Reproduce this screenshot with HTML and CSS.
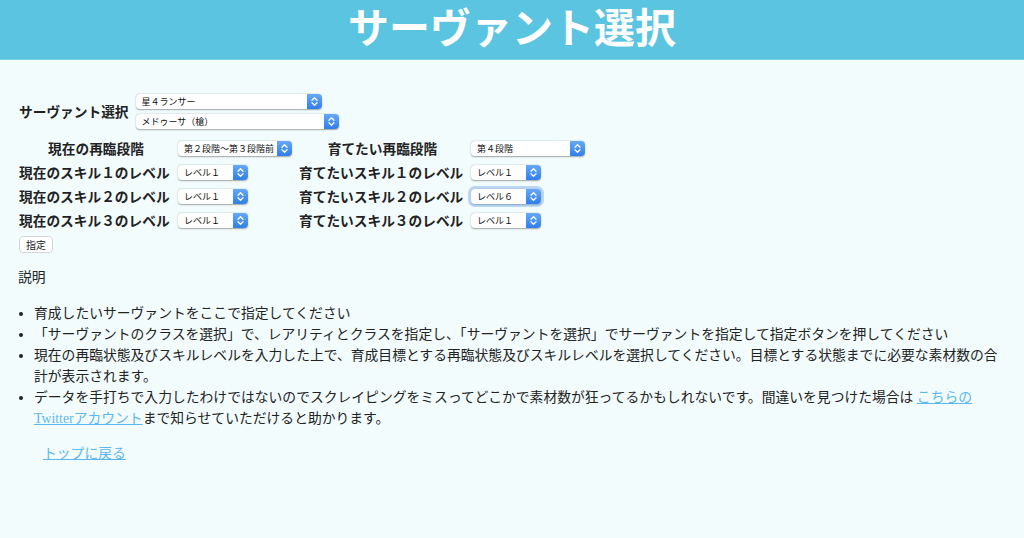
FILE: index.html
```html
<!DOCTYPE html>
<html lang="ja">
<head>
<meta charset="utf-8">
<title>サーヴァント選択</title>
<link rel="stylesheet" href="styles.css">
</head>
<body>
<header class="top">
  <h1 class="title">サーヴァント選択</h1>
</header>
<main class="main">
  <div class="servant-row">
    <span class="label">サーヴァント選択</span>
    <div class="servant-selects">
      <span class="sel w186"><select><option>星４ランサー</option></select><span class="arr"><svg width="15" height="15" viewBox="0 0 15 15"><path d="M5 6.2 L7.5 3.7 L10 6.2 M5 8.8 L7.5 11.3 L10 8.8" fill="none" stroke="#fff" stroke-width="1.3" stroke-linecap="round" stroke-linejoin="round"/></svg></span></span>
      <span class="sel w203"><select><option>メドゥーサ（槍）</option></select><span class="arr"><svg width="15" height="15" viewBox="0 0 15 15"><path d="M5 6.2 L7.5 3.7 L10 6.2 M5 8.8 L7.5 11.3 L10 8.8" fill="none" stroke="#fff" stroke-width="1.3" stroke-linecap="round" stroke-linejoin="round"/></svg></span></span>
    </div>
  </div>

  <div class="grid">
    <span class="label center">現在の再臨段階</span>
    <span class="cell"><span class="sel w114"><select><option>第２段階〜第３段階前</option></select><span class="arr"><svg width="15" height="15" viewBox="0 0 15 15"><path d="M5 6.2 L7.5 3.7 L10 6.2 M5 8.8 L7.5 11.3 L10 8.8" fill="none" stroke="#fff" stroke-width="1.3" stroke-linecap="round" stroke-linejoin="round"/></svg></span></span></span>
    <span class="label center">育てたい再臨段階</span>
    <span class="cell"><span class="sel w114"><select><option>第４段階</option></select><span class="arr"><svg width="15" height="15" viewBox="0 0 15 15"><path d="M5 6.2 L7.5 3.7 L10 6.2 M5 8.8 L7.5 11.3 L10 8.8" fill="none" stroke="#fff" stroke-width="1.3" stroke-linecap="round" stroke-linejoin="round"/></svg></span></span></span>

    <span class="label">現在のスキル１のレベル</span>
    <span class="cell"><span class="sel w70"><select><option>レベル１</option></select><span class="arr"><svg width="15" height="15" viewBox="0 0 15 15"><path d="M5 6.2 L7.5 3.7 L10 6.2 M5 8.8 L7.5 11.3 L10 8.8" fill="none" stroke="#fff" stroke-width="1.3" stroke-linecap="round" stroke-linejoin="round"/></svg></span></span></span>
    <span class="label">育てたいスキル１のレベル</span>
    <span class="cell"><span class="sel w70"><select><option>レベル１</option></select><span class="arr"><svg width="15" height="15" viewBox="0 0 15 15"><path d="M5 6.2 L7.5 3.7 L10 6.2 M5 8.8 L7.5 11.3 L10 8.8" fill="none" stroke="#fff" stroke-width="1.3" stroke-linecap="round" stroke-linejoin="round"/></svg></span></span></span>

    <span class="label">現在のスキル２のレベル</span>
    <span class="cell"><span class="sel w70"><select><option>レベル１</option></select><span class="arr"><svg width="15" height="15" viewBox="0 0 15 15"><path d="M5 6.2 L7.5 3.7 L10 6.2 M5 8.8 L7.5 11.3 L10 8.8" fill="none" stroke="#fff" stroke-width="1.3" stroke-linecap="round" stroke-linejoin="round"/></svg></span></span></span>
    <span class="label">育てたいスキル２のレベル</span>
    <span class="cell"><span class="sel w70 focus"><select><option>レベル６</option></select><span class="arr"><svg width="15" height="15" viewBox="0 0 15 15"><path d="M5 6.2 L7.5 3.7 L10 6.2 M5 8.8 L7.5 11.3 L10 8.8" fill="none" stroke="#fff" stroke-width="1.3" stroke-linecap="round" stroke-linejoin="round"/></svg></span></span></span>

    <span class="label">現在のスキル３のレベル</span>
    <span class="cell"><span class="sel w70"><select><option>レベル１</option></select><span class="arr"><svg width="15" height="15" viewBox="0 0 15 15"><path d="M5 6.2 L7.5 3.7 L10 6.2 M5 8.8 L7.5 11.3 L10 8.8" fill="none" stroke="#fff" stroke-width="1.3" stroke-linecap="round" stroke-linejoin="round"/></svg></span></span></span>
    <span class="label">育てたいスキル３のレベル</span>
    <span class="cell"><span class="sel w70"><select><option>レベル１</option></select><span class="arr"><svg width="15" height="15" viewBox="0 0 15 15"><path d="M5 6.2 L7.5 3.7 L10 6.2 M5 8.8 L7.5 11.3 L10 8.8" fill="none" stroke="#fff" stroke-width="1.3" stroke-linecap="round" stroke-linejoin="round"/></svg></span></span></span>
  </div>

  <button class="btn" type="button">指定</button>

  <p class="heading">説明</p>
  <ul class="notes">
    <li>育成したいサーヴァントをここで指定してください</li>
    <li>「サーヴァントのクラスを選択」で、レアリティとクラスを指定し、「サーヴァントを選択」でサーヴァントを指定して指定ボタンを押してください</li>
    <li>現在の再臨状態及びスキルレベルを入力した上で、育成目標とする再臨状態及びスキルレベルを選択してください。目標とする状態までに必要な素材数の合計が表示されます。</li>
    <li>データを手打ちで入力したわけではないのでスクレイピングをミスってどこかで素材数が狂ってるかもしれないです。間違いを見つけた場合は <a class="link" href="#">こちらの</a><a class="link" href="#">Twitterアカウント</a>まで知らせていただけると助かります。</li>
  </ul>
  <p class="back"><a class="link" href="#">トップに戻る</a></p>
</main>
</body>
</html>
```

FILE: styles.css
```css
body {
  margin: 0;
  background: #f2fcfd;
  color: #222;
  font-family: "Liberation Serif", "Noto Sans CJK JP", serif;
}

.top {
  background: #5bc4e0;
  height: 59px;
  border-bottom: 1px solid #7fd2e8;
}

.title {
  margin: 0;
  text-align: center;
  color: #fff;
  font-size: 41px;
  line-height: 58px;
  font-weight: 700;
}

.main {
  padding: 0 18px;
}

.servant-row {
  margin-top: 34px;
  display: flex;
  align-items: center;
  gap: 7px;
}

.label {
  font-size: 13.7px;
  font-weight: 700;
  white-space: nowrap;
  padding-left: 1px;
}

.servant-row .label {
  margin-bottom: 2px;
}

.center {
  text-align: center;
}

.servant-selects {
  display: flex;
  flex-direction: column;
  gap: 5px;
}

.sel {
  display: flex;
  height: 15px;
  background: #fff;
  border-radius: 4px;
  box-shadow: 0 0.5px 1.5px rgba(0, 0, 0, 0.35);
  overflow: hidden;
}

.sel select {
  flex: 1;
  min-width: 0;
  appearance: none;
  -webkit-appearance: none;
  border: none;
  background: transparent;
  margin: 0;
  padding: 0 0 0 6px;
  height: 15px;
  font-family: "Noto Sans CJK JP", sans-serif;
  font-size: 9px;
  line-height: 15px;
  color: #111;
  outline: none;
}

.arr {
  width: 15px;
  height: 15px;
  flex: none;
  background: linear-gradient(#67a9f7, #2f7ee9);
  display: flex;
}

.w186 { width: 186px; }
.w203 { width: 203px; }
.w114 { width: 114px; }
.w70 { width: 70px; }

.focus {
  box-shadow: 0 0 0 3px rgba(120, 170, 240, 0.45), 0 0.5px 1.5px rgba(0, 0, 0, 0.35);
}

.grid {
  margin-top: 7px;
  display: grid;
  grid-template-columns: 155px 115px 168px auto;
  grid-auto-rows: 24px;
  column-gap: 5px;
  align-items: center;
}

.cell {
  display: flex;
}

.btn {
  display: block;
  margin: 4px 0 0 1px;
  width: 34px;
  height: 17px;
  padding: 0;
  background: #fff;
  border: 1px solid #d6d6d6;
  border-radius: 4px;
  font-family: "Noto Sans CJK JP", sans-serif;
  font-size: 10px;
  line-height: 15px;
  color: #222;
}

.heading {
  margin: 15px 0 0;
  font-size: 13.8px;
  line-height: 20px;
}

.notes {
  margin: 15px 0 0;
  padding-left: 16px;
  font-size: 13.8px;
  line-height: 21px;
}

.link {
  color: #5db7ef;
  text-decoration: underline;
}

.back {
  margin: 14px 0 0;
  padding-left: 25px;
  font-size: 13.8px;
  line-height: 21px;
}
```
